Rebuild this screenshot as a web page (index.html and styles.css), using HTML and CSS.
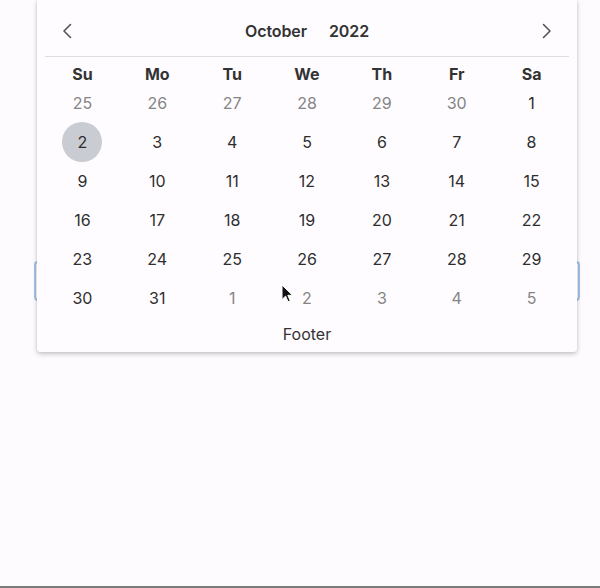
FILE: index.html
```html
<!DOCTYPE html>
<html lang="en">

<head>
    <meta charset="UTF-8">
    <meta name="viewport" content="width=device-width, initial-scale=1.0">
    <title>Date Picker</title>
    <link rel="stylesheet" href="styles.css">
</head>

<body>
    <div class="page">
        <div class="field"></div>

        <div class="picker">
            <div class="picker-header">
                <button class="nav-btn" aria-label="Previous month">
                    <svg width="10" height="16" viewBox="0 0 10 16"><path d="M8.5 1.5 2 8l6.5 6.5" fill="none" stroke="#555" stroke-width="1.6" stroke-linecap="round" stroke-linejoin="round"/></svg>
                </button>
                <div class="title">
                    <span>October</span>
                    <span>2022</span>
                </div>
                <button class="nav-btn" aria-label="Next month">
                    <svg width="10" height="16" viewBox="0 0 10 16"><path d="M1.5 1.5 8 8l-6.5 6.5" fill="none" stroke="#555" stroke-width="1.6" stroke-linecap="round" stroke-linejoin="round"/></svg>
                </button>
            </div>

            <div class="weekdays">
                <span>Su</span><span>Mo</span><span>Tu</span><span>We</span><span>Th</span><span>Fr</span><span>Sa</span>
            </div>

            <div class="days">
                <span class="day muted">25</span><span class="day muted">26</span><span class="day muted">27</span><span class="day muted">28</span><span class="day muted">29</span><span class="day muted">30</span><span class="day">1</span>
                <span class="day"><span class="selected">2</span></span><span class="day">3</span><span class="day">4</span><span class="day">5</span><span class="day">6</span><span class="day">7</span><span class="day">8</span>
                <span class="day">9</span><span class="day">10</span><span class="day">11</span><span class="day">12</span><span class="day">13</span><span class="day">14</span><span class="day">15</span>
                <span class="day">16</span><span class="day">17</span><span class="day">18</span><span class="day">19</span><span class="day">20</span><span class="day">21</span><span class="day">22</span>
                <span class="day">23</span><span class="day">24</span><span class="day">25</span><span class="day">26</span><span class="day">27</span><span class="day">28</span><span class="day">29</span>
                <span class="day">30</span><span class="day">31</span><span class="day muted">1</span><span class="day muted">2</span><span class="day muted">3</span><span class="day muted">4</span><span class="day muted">5</span>
            </div>

            <div class="picker-footer">Footer</div>
        </div>

        <svg class="cursor" width="12" height="19" viewBox="0 0 12 19"><path d="M1 1v14.5l3.6-3.4 2.4 5.6 2.2-1-2.4-5.4H11.5z" fill="#111" stroke="#fff" stroke-width="1" stroke-linejoin="round"/></svg>
    </div>
</body>

</html>
```

FILE: styles.css
```css
* {
    box-sizing: border-box;
    margin: 0;
    padding: 0;
    font-family: Inter, 'Noto Sans', sans-serif;
}

body {
    background-color: #fdfbfe;
}

.page {
    position: relative;
    height: 588px;
    border-bottom: 2px solid #7b7b7b;
    overflow: hidden;
}

.field {
    margin: 261px 20px 0 34px;
    height: 40px;
    border: 2px solid #a3c2e8;
    border-radius: 4px;
    background-color: #fff;
}

.picker {
    position: absolute;
    top: 0;
    left: 37px;
    width: 540px;
    height: 352px;
    padding: 0 8px;
    background-color: #fefcff;
    border-radius: 0 0 3px 3px;
    box-shadow: 0 2px 5px rgba(0, 0, 0, 0.22), 0 0 2px rgba(0, 0, 0, 0.12);
}

.picker-header {
    display: flex;
    align-items: center;
    justify-content: space-between;
    height: 57px;
    padding: 6px 17px 0 17px;
    border-bottom: 1px solid #dedde0;
}

.nav-btn {
    display: flex;
    align-items: center;
    background: none;
    border: none;
    cursor: pointer;
}

.title {
    display: flex;
    gap: 22px;
    font-size: 16px;
    font-weight: 600;
    letter-spacing: -0.1px;
    color: #333;
}

.weekdays,
.days {
    display: grid;
    grid-template-columns: repeat(7, 1fr);
    text-align: center;
}

.weekdays {
    padding-top: 7px;
    height: 26px;
    font-size: 16px;
    font-weight: 700;
    line-height: 20px;
    color: #333;
}

.day {
    display: flex;
    align-items: center;
    justify-content: center;
    height: 39px;
    font-size: 16px;
    color: #2e2e2e;
}

.day.muted {
    color: #858585;
}

.selected {
    display: flex;
    align-items: center;
    justify-content: center;
    width: 40px;
    height: 40px;
    border-radius: 50%;
    background-color: #c9ccd2;
}

.picker-footer {
    height: 35px;
    line-height: 35px;
    text-align: center;
    font-size: 16px;
    color: #333;
}

.cursor {
    position: absolute;
    top: 284px;
    left: 281px;
}
```
